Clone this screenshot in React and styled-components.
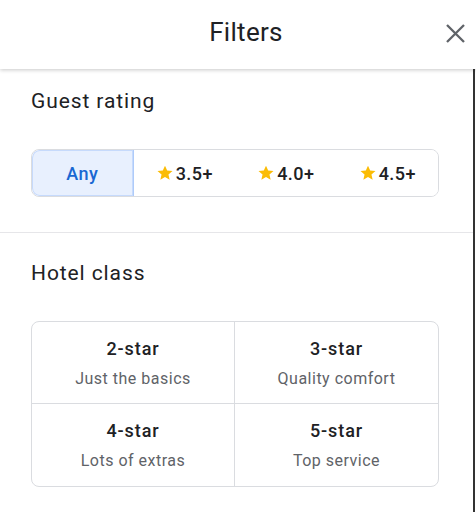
import React from 'react';
import styled, { createGlobalStyle } from 'styled-components';

const GlobalStyle = createGlobalStyle`
  html, body {
    margin: 0;
    padding: 0;
    background: #ffffff;
  }
  body {
    font-family: Roboto, 'Noto Sans', Arial, sans-serif;
    color: #202124;
  }
`;

const Sheet = styled.div`
  width: 476px;
  height: 512px;
  overflow: hidden;
  display: flex;
  flex-direction: column;
  background: #fff;
`;

const Header = styled.header`
  position: relative;
  z-index: 1;
  height: 69px;
  flex: none;
  display: flex;
  align-items: center;
  justify-content: center;
  background: #fff;
  box-shadow: 0 1px 4px rgba(0, 0, 0, 0.22);
`;

const Title = styled.h1`
  margin: 0;
  font-size: 26px;
  font-weight: 400;
  letter-spacing: 0.3px;
  color: #202124;
  transform: translate(8px, -3px);
`;

const CloseButton = styled.button`
  position: absolute;
  right: 11px;
  top: 24px;
  width: 19px;
  height: 19px;
  padding: 0;
  border: none;
  background: none;
  display: flex;
  align-items: center;
  justify-content: center;
`;

const Body = styled.main`
  flex: 1;
  margin-right: 1px;
  border-right: 2px solid #333;
`;

const Section = styled.section`
  padding: ${({ top }) => top}px 34px ${({ bottom }) => bottom}px 31px;
  border-bottom: ${({ divider }) => (divider ? '1px solid #e6e6e9' : 'none')};
`;

const SectionTitle = styled.h2`
  margin: 0 0 36px;
  font-size: 21px;
  line-height: 24px;
  font-weight: 400;
  letter-spacing: 0.9px;
  color: #202124;
`;

const Segmented = styled.div`
  display: grid;
  grid-template-columns: repeat(4, 1fr);
  height: 48px;
  border: 1px solid #dadce0;
  border-radius: 8px;
  overflow: hidden;
  box-sizing: border-box;
`;

const Segment = styled.div`
  display: flex;
  align-items: center;
  justify-content: center;
  gap: 2px;
  font-size: 18px;
  font-weight: 500;
  letter-spacing: 0.4px;
  color: ${({ selected }) => (selected ? '#1967d2' : '#202124')};
  background: ${({ selected }) => (selected ? '#e8f0fe' : '#fff')};
  border-right: ${({ selected }) => (selected ? '1px solid #aecbfa' : 'none')};
  box-shadow: ${({ selected }) => (selected ? 'inset 0 0 0 1px #c6dafc' : 'none')};
  border-radius: ${({ selected }) => (selected ? '8px 0 0 8px' : '0')};
`;

const ClassGrid = styled.div`
  display: grid;
  grid-template-columns: 1fr 1fr;
  border: 1px solid #dadce0;
  border-radius: 8px;
  overflow: hidden;
`;

const ClassCell = styled.div`
  height: 82px;
  box-sizing: border-box;
  padding-top: 16px;
  display: flex;
  flex-direction: column;
  align-items: center;
  gap: 8px;
  border-right: ${({ col }) => (col === 0 ? '1px solid #dadce0' : 'none')};
  border-bottom: ${({ row }) => (row === 0 ? '1px solid #dadce0' : 'none')};
`;

const ClassName = styled.div`
  font-size: 18px;
  line-height: 22px;
  font-weight: 500;
  letter-spacing: 0.9px;
  color: #202124;
`;

const ClassNote = styled.div`
  font-size: 16px;
  line-height: 22px;
  letter-spacing: 0.5px;
  color: #5f6368;
`;

const Star = () => (
  <svg width="18" height="18" viewBox="0 0 24 24" aria-hidden="true">
    <path
      fill="#fbbc04"
      d="M12 2.2l2.9 6.6 7.1.6-5.4 4.7 1.6 7-6.2-3.7-6.2 3.7 1.6-7L2 9.4l7.1-.6z"
    />
  </svg>
);

const CloseIcon = () => (
  <svg width="19" height="19" viewBox="0 0 19 19" aria-hidden="true">
    <path d="M1 1l17 17M18 1L1 18" stroke="#5f6368" strokeWidth="2.3" />
  </svg>
);

const ratings = ['Any', '3.5+', '4.0+', '4.5+'];

const classes = [
  { name: '2-star', note: 'Just the basics' },
  { name: '3-star', note: 'Quality comfort' },
  { name: '4-star', note: 'Lots of extras' },
  { name: '5-star', note: 'Top service' },
];

export default function App() {
  return (
    <>
      <GlobalStyle />
      <Sheet>
        <Header>
          <Title>Filters</Title>
          <CloseButton aria-label="Close">
            <CloseIcon />
          </CloseButton>
        </Header>
        <Body>
          <Section top={20} bottom={35} divider>
            <SectionTitle>Guest rating</SectionTitle>
            <Segmented>
              {ratings.map((r, i) => (
                <Segment key={r} selected={i === 0}>
                  {i > 0 && <Star />}
                  {r}
                </Segment>
              ))}
            </Segmented>
          </Section>
          <Section top={28} bottom={0}>
            <SectionTitle>Hotel class</SectionTitle>
            <ClassGrid>
              {classes.map((c, i) => (
                <ClassCell key={c.name} col={i % 2} row={Math.floor(i / 2)}>
                  <ClassName>{c.name}</ClassName>
                  <ClassNote>{c.note}</ClassNote>
                </ClassCell>
              ))}
            </ClassGrid>
          </Section>
        </Body>
      </Sheet>
    </>
  );
}
